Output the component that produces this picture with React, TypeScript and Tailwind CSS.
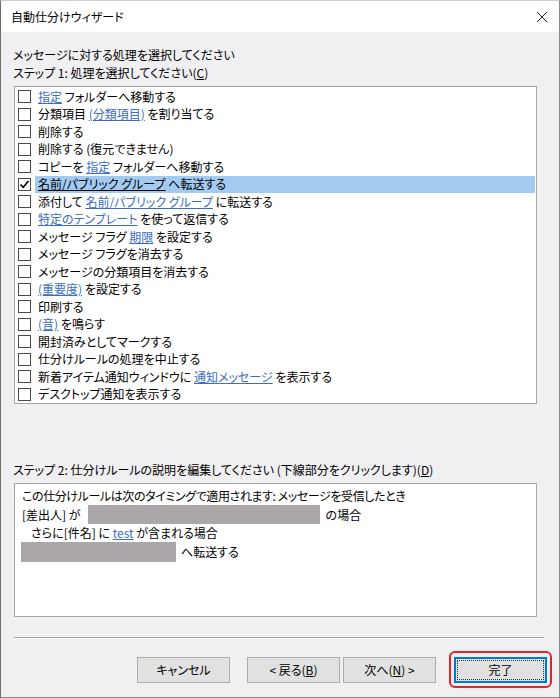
import React from "react";

type Part = { t: string; link?: boolean };
type Row = { parts: Part[]; checked?: boolean };

const rows: Row[] = [
  { parts: [{ t: "指定", link: true }, { t: " フォルダーへ移動する" }] },
  { parts: [{ t: "分類項目 " }, { t: "(分類項目)", link: true }, { t: " を割り当てる" }] },
  { parts: [{ t: "削除する" }] },
  { parts: [{ t: "削除する (復元できません)" }] },
  { parts: [{ t: "コピーを " }, { t: "指定", link: true }, { t: " フォルダーへ移動する" }] },
  { parts: [{ t: "名前/パブリック グループ", link: true }, { t: " へ転送する" }], checked: true },
  { parts: [{ t: "添付して " }, { t: "名前/パブリック グループ", link: true }, { t: " に転送する" }] },
  { parts: [{ t: "特定のテンプレート", link: true }, { t: " を使って返信する" }] },
  { parts: [{ t: "メッセージ フラグ " }, { t: "期限", link: true }, { t: " を設定する" }] },
  { parts: [{ t: "メッセージ フラグを消去する" }] },
  { parts: [{ t: "メッセージの分類項目を消去する" }] },
  { parts: [{ t: "(重要度)", link: true }, { t: " を設定する" }] },
  { parts: [{ t: "印刷する" }] },
  { parts: [{ t: "(音)", link: true }, { t: " を鳴らす" }] },
  { parts: [{ t: "開封済みとしてマークする" }] },
  { parts: [{ t: "仕分けルールの処理を中止する" }] },
  { parts: [{ t: "新着アイテム通知ウィンドウに " }, { t: "通知メッセージ", link: true }, { t: " を表示する" }] },
  { parts: [{ t: "デスクトップ通知を表示する" }] },
];

function Checkbox({ checked }: { checked?: boolean }) {
  return (
    <div className="w-[13px] h-[13px] border border-[#4a4a4a] bg-white flex items-center justify-center shrink-0">
      {checked && (
        <svg width="11" height="11" viewBox="0 0 11 11">
          <path d="M1.5 5.5 L4.2 8.3 L9.5 2" fill="none" stroke="#000" strokeWidth="1.6" />
        </svg>
      )}
    </div>
  );
}

function Btn({ children, primary }: { children: React.ReactNode; primary?: boolean }) {
  return (
    <div
      className={
        "h-[26px] w-[93px] bg-[#e1e1e1] flex items-center justify-center text-[12px] text-black " +
        (primary ? "border-2 border-[#0078d7] p-[1px]" : "border border-[#adadad]")
      }
    >
      {primary ? (
        <div className="w-full h-full border border-dotted border-[#333] flex items-center justify-center">
          {children}
        </div>
      ) : (
        children
      )}
    </div>
  );
}

export default function App() {
  return (
    <div
      className="w-[560px] h-[698px] bg-[#f0eff2] border-l border-r border-b border-t border-l-[#6e6e6e] border-r-[#8a8a8a] border-b-[#8a8a8a] border-t-[#cfcfcf] flex flex-col text-black [font-feature-settings:'palt']"
      style={{ fontFamily: '"Noto Sans CJK JP", "Noto Sans", sans-serif' }}
    >
      {/* Title bar */}
      <div className="h-[31px] bg-white flex items-center justify-between pl-[10px] pr-[11px] shrink-0">
        <span className="text-[12px] leading-none">自動仕分けウィザード</span>
        <svg width="12" height="12" viewBox="0 0 12 12">
          <path d="M1 1 L11 11 M11 1 L1 11" stroke="#222" strokeWidth="1" />
        </svg>
      </div>

      <div className="flex flex-col pl-[12px] pr-[22px] pt-[14px]">
        <div className="text-[12px] leading-[18px]">メッセージに対する処理を選択してください</div>
        <div className="text-[12px] leading-[18px]">
          ステップ 1: 処理を選択してください(<span className="underline">C</span>)
        </div>

        {/* Step 1 list */}
        <div className="mt-[4px] ml-[1px] w-[523px] h-[318px] bg-white border border-[#a8a8a8] border-t-[#9a9a9a] pt-[1px]">
          {rows.map((r, i) => (
            <div key={i} className="h-[17.5px] flex items-center text-[12px]">
              <div className="pl-[3px] pr-[4px]">
                <Checkbox checked={r.checked} />
              </div>
              <div
                className={
                  "h-full flex items-center pl-[3px] flex-1 mr-[1px] whitespace-pre " +
                  (r.checked ? "bg-[#a3cbf2]" : "")
                }
              >
                {r.parts.map((p, j) =>
                  p.link ? (
                    <span
                      key={j}
                      className={"underline " + (r.checked ? "text-black" : "text-[#3b6dc2]")}
                    >
                      {p.t}
                    </span>
                  ) : (
                    <span key={j}>{p.t}</span>
                  )
                )}
              </div>
            </div>
          ))}
        </div>

        <div className="mt-[57px] text-[12px] leading-[18px] whitespace-pre">
          ステップ 2: 仕分けルールの説明を編集してください (下線部分をクリックします)(<span className="underline">D</span>)
        </div>

        {/* Step 2 box */}
        <div className="mt-[4px] ml-[1px] w-[523px] h-[134px] bg-white border border-[#a8a8a8] pl-[7px] pt-[3px] text-[12px] leading-[18px] whitespace-pre">
          <div className="tracking-[-0.4px]">この仕分けルールは次のタイミングで適用されます: メッセージを受信したとき</div>
          <div className="flex items-center">
            <span>[差出人] が</span>
            <span className="inline-block ml-[7px] w-[232px] h-[19px] bg-[#aba7aa]" />
            <span className="ml-[6px]">の場合</span>
          </div>
          <div className="pl-[9px]">
            さらに[件名] に <span className="underline text-[#3b6dc2]">test</span> が含まれる場合
          </div>
          <div className="flex items-center -ml-[1px]">
            <span className="inline-block w-[155px] h-[20px] bg-[#aba7aa]" />
            <span className="ml-[5px]">へ転送する</span>
          </div>
        </div>

        {/* Separator */}
        <div className="mt-[20px] ml-[1px] w-[530px] h-[2px] border-t border-t-[#a0a0a0] border-b border-b-white" />
      </div>

      {/* Buttons */}
      <div className="mt-[18px] flex justify-end pr-[12px]">
        <div className="w-[95px] mr-[15px]">
          <Btn>キャンセル</Btn>
        </div>
        <div className="mr-[3px]">
          <Btn>
            &lt; 戻る(<span className="underline">B</span>)
          </Btn>
        </div>
        <div className="mr-[18px]">
          <Btn>
            次へ(<span className="underline">N</span>) &gt;
          </Btn>
        </div>
        <div className="relative">
          <Btn primary>完了</Btn>
          <div className="absolute -left-[5px] -top-[6px] -right-[5px] -bottom-[5px] border-2 border-[#e5242a] rounded-[6px] pointer-events-none" />
        </div>
      </div>
    </div>
  );
}
